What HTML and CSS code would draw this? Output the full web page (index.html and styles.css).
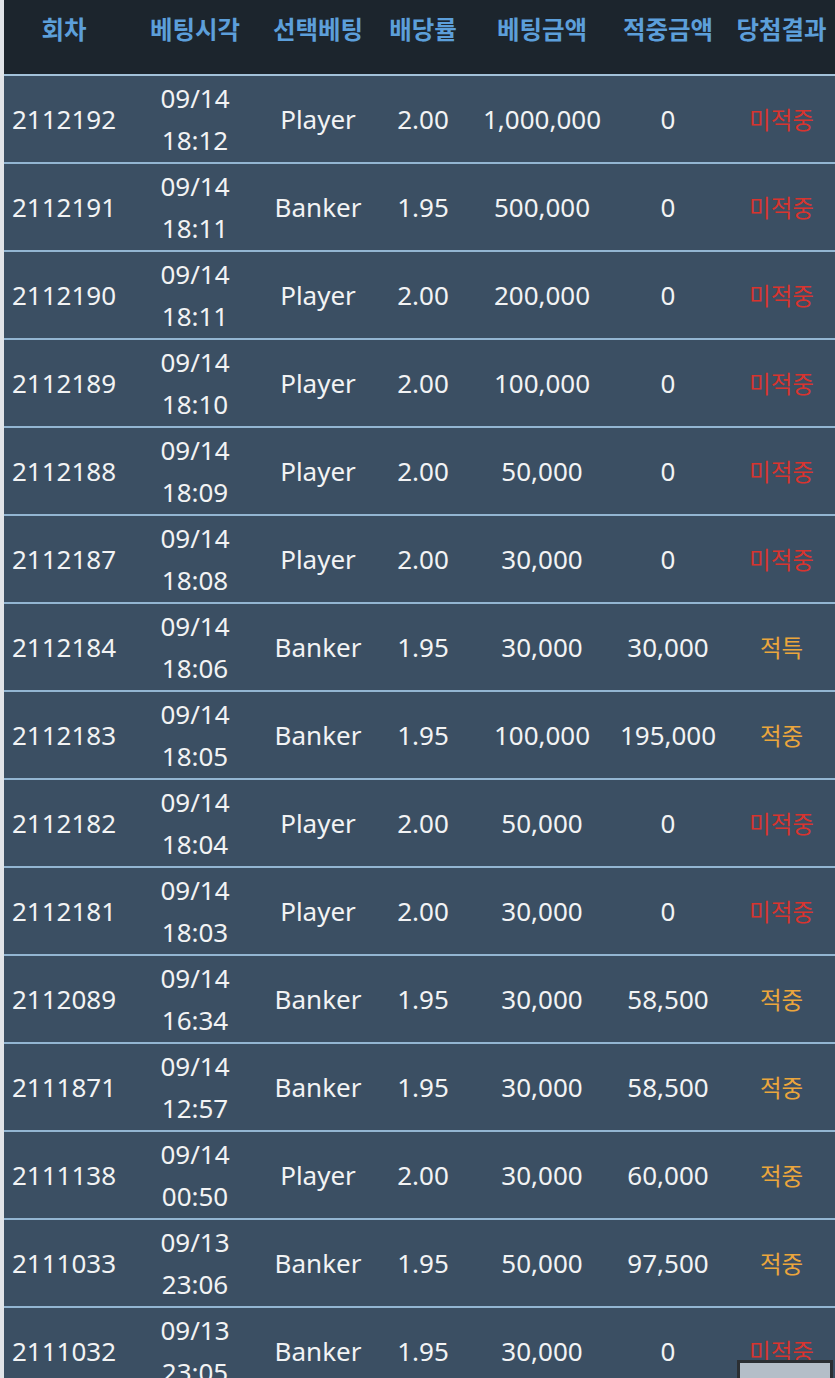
FILE: index.html
```html
<!DOCTYPE html>
<html lang="ko">
<head>
  <meta charset="UTF-8">
  <meta name="viewport" content="width=device-width, initial-scale=1.0">
  <title>베팅내역</title>
  <link rel="stylesheet" href="styles.css">
</head>
<body>
  <div class="history">
    <table class="bet-table">
      <colgroup>
        <col class="c-round">
        <col class="c-time">
        <col class="c-pick">
        <col class="c-odds">
        <col class="c-amount">
        <col class="c-win">
        <col class="c-result">
      </colgroup>
      <thead>
        <tr>
          <th>회차</th>
          <th>베팅시각</th>
          <th>선택베팅</th>
          <th>배당률</th>
          <th>베팅금액</th>
          <th>적중금액</th>
          <th>당첨결과</th>
        </tr>
      </thead>
      <tbody>
        <tr><td>2112192</td><td>09/14<br>18:12</td><td>Player</td><td>2.00</td><td>1,000,000</td><td>0</td><td class="result lose">미적중</td></tr>
        <tr><td>2112191</td><td>09/14<br>18:11</td><td>Banker</td><td>1.95</td><td>500,000</td><td>0</td><td class="result lose">미적중</td></tr>
        <tr><td>2112190</td><td>09/14<br>18:11</td><td>Player</td><td>2.00</td><td>200,000</td><td>0</td><td class="result lose">미적중</td></tr>
        <tr><td>2112189</td><td>09/14<br>18:10</td><td>Player</td><td>2.00</td><td>100,000</td><td>0</td><td class="result lose">미적중</td></tr>
        <tr><td>2112188</td><td>09/14<br>18:09</td><td>Player</td><td>2.00</td><td>50,000</td><td>0</td><td class="result lose">미적중</td></tr>
        <tr><td>2112187</td><td>09/14<br>18:08</td><td>Player</td><td>2.00</td><td>30,000</td><td>0</td><td class="result lose">미적중</td></tr>
        <tr><td>2112184</td><td>09/14<br>18:06</td><td>Banker</td><td>1.95</td><td>30,000</td><td>30,000</td><td class="result win">적특</td></tr>
        <tr><td>2112183</td><td>09/14<br>18:05</td><td>Banker</td><td>1.95</td><td>100,000</td><td>195,000</td><td class="result win">적중</td></tr>
        <tr><td>2112182</td><td>09/14<br>18:04</td><td>Player</td><td>2.00</td><td>50,000</td><td>0</td><td class="result lose">미적중</td></tr>
        <tr><td>2112181</td><td>09/14<br>18:03</td><td>Player</td><td>2.00</td><td>30,000</td><td>0</td><td class="result lose">미적중</td></tr>
        <tr><td>2112089</td><td>09/14<br>16:34</td><td>Banker</td><td>1.95</td><td>30,000</td><td>58,500</td><td class="result win">적중</td></tr>
        <tr><td>2111871</td><td>09/14<br>12:57</td><td>Banker</td><td>1.95</td><td>30,000</td><td>58,500</td><td class="result win">적중</td></tr>
        <tr><td>2111138</td><td>09/14<br>00:50</td><td>Player</td><td>2.00</td><td>30,000</td><td>60,000</td><td class="result win">적중</td></tr>
        <tr><td>2111033</td><td>09/13<br>23:06</td><td>Banker</td><td>1.95</td><td>50,000</td><td>97,500</td><td class="result win">적중</td></tr>
        <tr><td>2111032</td><td>09/13<br>23:05</td><td>Banker</td><td>1.95</td><td>30,000</td><td>0</td><td class="result lose">미적중</td></tr>
      </tbody>
    </table>
  </div>

  <div class="float-btn"></div>
</body>
</html>
```

FILE: styles.css
```css
body {
  font-family: "Noto Sans", "Noto Sans CJK KR", sans-serif;
  margin: 0;
  padding: 0 0 0 4px;
  background-color: #e1e4e8;
}

.history {
  background-color: #3b4f63;
}

.bet-table {
  width: 831px;
  border-collapse: collapse;
  table-layout: fixed;
}

.c-round { width: 120px; }
.c-time { width: 142px; }
.c-pick { width: 104px; }
.c-odds { width: 106px; }
.c-amount { width: 132px; }
.c-win { width: 120px; }
.c-result { width: 107px; }

.bet-table th {
  background-color: #1c252d;
  color: #5c9fda;
  font-family: "Noto Sans CJK KR", sans-serif;
  font-size: 24.5px;
  font-weight: 700;
  line-height: 38px;
  padding: 10px 0 26px;
  text-align: center;
  white-space: nowrap;
  border-bottom: 2px solid #a3c2da;
}

.bet-table td {
  background-color: #3b4f63;
  color: #f2f3f4;
  font-size: 26px;
  line-height: 42px;
  padding: 1px 0;
  text-align: center;
  white-space: nowrap;
  border-bottom: 2px solid #93b6d2;
}

.bet-table td.result {
  font-family: "Noto Sans CJK KR", sans-serif;
  font-size: 23.5px;
}

.result.lose {
  color: #d8342f;
}

.result.win {
  color: #eba63c;
}

.float-btn {
  position: fixed;
  left: 737px;
  top: 1360px;
  width: 90px;
  height: 40px;
  background-color: #b4bec8;
  border: 3px solid #2b2f33;
}
```
